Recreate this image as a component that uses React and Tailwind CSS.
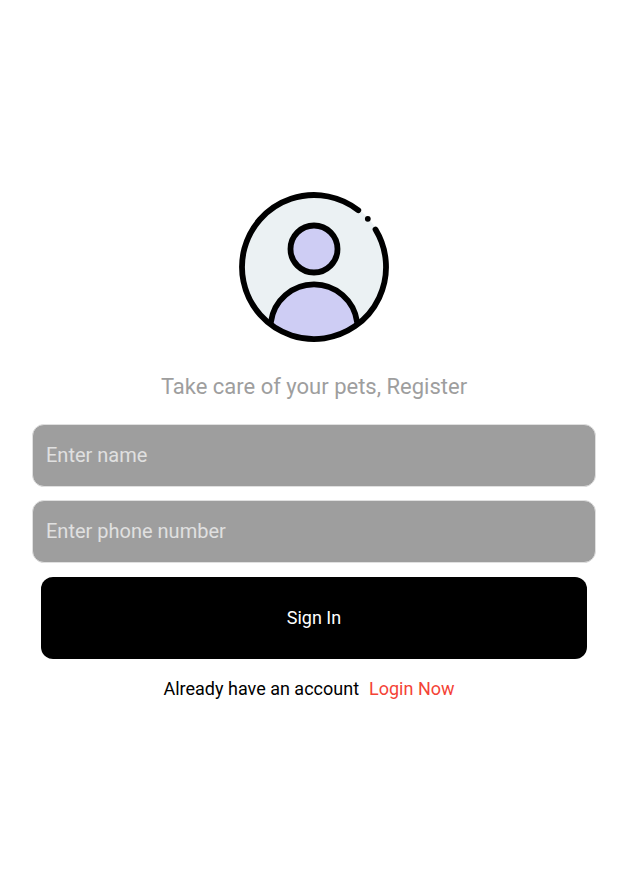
function Avatar() {
  return (
    <svg viewBox="0 0 150 150" className="size-[150px]" fill="none" stroke="#000" strokeWidth="5.8" strokeLinecap="round" role="img" aria-label="User avatar">
      <circle cx="75" cy="75" r="73" fill="#ebf1f3" stroke="none" />
      <path d="M31.900 132A43.500 43.500 0 0 1 118.100 132Q98 147 75 147T31.900 132Z" fill="#cecdf4" stroke="none" />
      <path d="M119.280 18.240A72 72 0 1 0 136.520 37.590" />
      <circle cx="75" cy="57" r="23.500" fill="#cecdf4" />
      <path d="M31.900 130A43.500 43.500 0 0 1 118.100 130" />
      <circle cx="128.800" cy="26.800" r="2.900" fill="#000" stroke="none" />
    </svg>
  );
}

function Field({ label, type, name }) {
  return (
    <input
      type={type}
      name={name}
      aria-label={label}
      placeholder={label}
      className="block h-[63px] w-full rounded-xl border border-[#e0e0e0] bg-[#9e9e9e] px-[13px] pb-0.5 text-xl text-white outline-none placeholder:text-[#e0e0e0]"
    />
  );
}

export default function App() {
  return (
    <main className="flex min-h-screen flex-col items-center justify-center bg-white pt-[3px] font-['Roboto',sans-serif]">
      <Avatar />
      <h1 className="mt-7 text-[22px] leading-[34px] text-[#9e9e9e]">Take care of your pets, Register</h1>
      <form className="mt-5 w-full px-8" onSubmit={(e) => e.preventDefault()}>
        <div className="flex flex-col gap-[13px]">
          <Field label="Enter name" type="text" name="name" />
          <Field label="Enter phone number" type="tel" name="phone" />
        </div>
        <div className="mt-3.5 px-[9px]">
          <button type="submit" className="block h-[82px] w-full rounded-xl bg-black text-lg text-white">Sign In</button>
        </div>
      </form>
      <p className="mt-4 flex gap-2.5 pr-2.5 text-lg text-black">
        <span>Already have an account</span>
        <a href="#login" className="text-[#f44336]">Login Now</a>
      </p>
    </main>
  );
}
